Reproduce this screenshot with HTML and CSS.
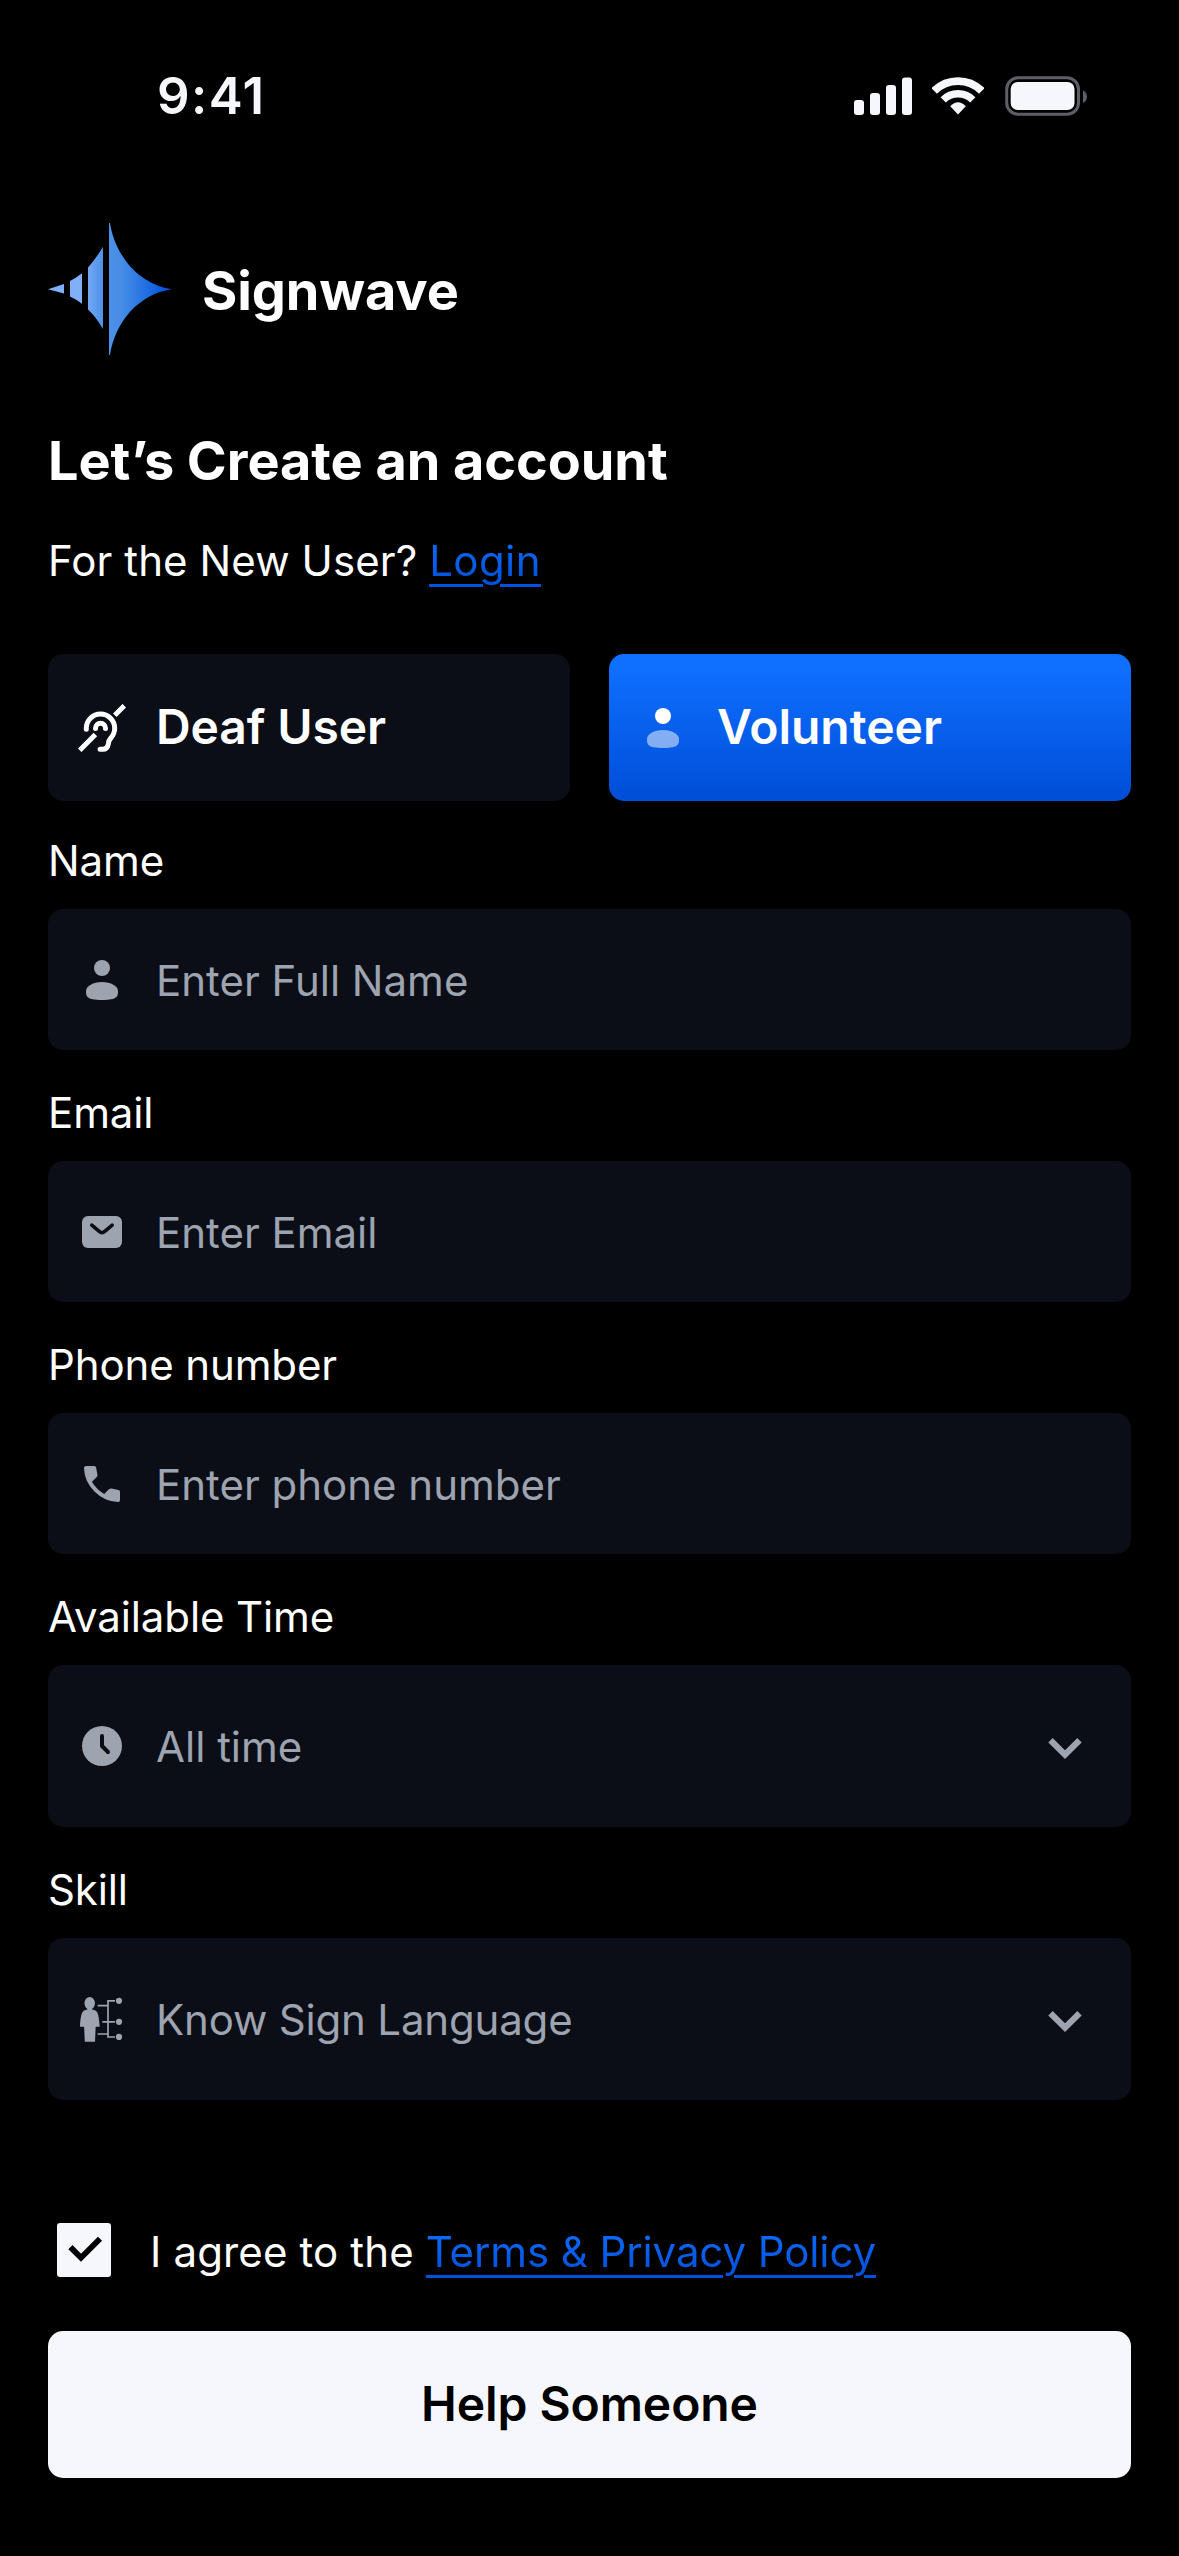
FILE: index.html
```html
<!DOCTYPE html>
<html lang="en">
<head>
<meta charset="utf-8">
<title>Signwave</title>
<link rel="stylesheet" href="styles.css">
</head>
<body>
<div class="status-bar">
  <span class="time">9:41</span>
  <div class="indicators">
    <svg width="58" height="38" viewBox="0 0 58 38" fill="currentColor"><rect x="0" y="23" width="10" height="15" rx="3"/><rect x="16" y="16" width="10" height="22" rx="3"/><rect x="32" y="8" width="10" height="30" rx="3"/><rect x="48" y="0.5" width="10" height="37.5" rx="3"/></svg>
    <svg class="wifi" width="52" height="38" viewBox="0 0 52 38" fill="none" stroke="currentColor"><path d="M2.2 13.9A33.7 33.7 0 0 1 49.8 13.9" stroke-width="7.8"/><path d="M11.2 22.9A21 21 0 0 1 40.8 22.9" stroke-width="7.4"/><path d="M26 37.6L18.2 29.3Q26 21 33.8 29.3Z" fill="currentColor" stroke="none"/></svg>
    <svg class="battery" width="82" height="40" viewBox="0 0 82 40"><rect x="1.7" y="1.7" width="71.8" height="36.6" rx="11.5" fill="none" stroke="#5d5e66" stroke-width="3"/><rect x="5.7" y="6" width="63.8" height="28" rx="7" fill="currentColor"/><path d="M78 14.5v12.5c2.500-1 4-3.400 4-6.200s-1.500-5.200-4-6.300" fill="#5d5e66"/></svg>
  </div>
</div>

<main class="screen">
  <header class="brand">
    <svg width="124" height="134" viewBox="0 0 124 134"><defs><linearGradient id="wave" gradientUnits="userSpaceOnUse" x1="0" y1="0" x2="124" y2="0"><stop offset="0.28" stop-color="#7fb0f8"/><stop offset="0.44" stop-color="#4f92e9"/><stop offset="0.6" stop-color="#468ce6"/><stop offset="0.95" stop-color="#0457de"/></linearGradient></defs><path fill="url(#wave)" d="M0 67.300L16 62v9.500zM22 58.900Q28 56 34 51.300v30.400Q28 77.500 22 74.600zM40 45.600Q48 36.500 55 24.700v82.300Q48 95 40 87.500zM61 1H62C67 33 90 62 123.800 67.300C90 72 67 101 62 133H61z"/></svg>
    <span class="brand-name">Signwave</span>
  </header>

  <h1 class="title">Let’s Create an account</h1>
  <p class="subtitle">For the New User? <a class="link">Login</a></p>

  <div class="roles">
    <div class="role">
      <svg class="icon" viewBox="0 0 48 48" fill="none" stroke="currentColor" stroke-width="5"><path d="M46.300 1.700L36.800 11.200M1.700 46.300L17.400 30.600"/><path stroke-linecap="round" d="M8.300 25.300V24.200A14.200 14.200 0 0 1 36.700 24.200c0 4.800-1.900 7.700-4.200 10.300c-1.900 2.200-1.900 3.600-2.200 5.500c-.6 3.300-2.700 5.300-5.600 5.300h-2.600"/><path stroke-linecap="round" d="M17.500 24.600v-.3a5 5 0 0 1 10 0v.3"/></svg>
      <span>Deaf User</span>
    </div>
    <div class="role role-active">
      <svg class="icon" viewBox="0 0 24 24" fill="currentColor"><circle cx="12" cy="6" r="4"/><path opacity=".5" d="M20 17.500c0 2.485 0 4.500-8 4.500s-8-2.015-8-4.500S7.582 13 12 13s8 2.015 8 4.500"/></svg>
      <span>Volunteer</span>
    </div>
  </div>

  <div class="group">
    <span class="label">Name</span>
    <div class="field">
      <svg class="icon" viewBox="0 0 24 24" fill="currentColor"><circle cx="12" cy="6" r="4"/><path d="M20 17.500c0 2.485 0 4.500-8 4.500s-8-2.015-8-4.500S7.582 13 12 13s8 2.015 8 4.500"/></svg>
      <span>Enter Full Name</span>
    </div>
  </div>

  <div class="group">
    <span class="label">Email</span>
    <div class="field">
      <svg class="icon" viewBox="0 0 24 24"><rect x="2" y="4" width="20" height="16" rx="3" fill="currentColor"/><path d="M6.900 8.600l3.700 3.100q1.400 1.200 2.800 0l3.700-3.100" fill="none" stroke="#0b0d17" stroke-width="1.800" stroke-linecap="round"/></svg>
      <span>Enter Email</span>
    </div>
  </div>

  <div class="group">
    <span class="label">Phone number</span>
    <div class="field">
      <svg class="icon" viewBox="0 0 24 24" fill="currentColor"><path d="M19.950 21q-3.125 0-6.175-1.362t-5.550-3.863t-3.862-5.550T3 4.050q0-.45.3-.75t.75-.3H8.100q.35 0 .625.238t.325.562l.65 3.500q.05.4-.025.675T9.400 8.450L6.975 10.900q.5.925 1.187 1.787t1.513 1.663q.775.775 1.625 1.438T13.100 17l2.350-2.350q.225-.225.588-.337t.712-.063l3.450.7q.35.1.575.363T21 15.900v4.050q0 .45-.3.75t-.75.3"/></svg>
      <span>Enter phone number</span>
    </div>
  </div>

  <div class="group">
    <span class="label">Available Time</span>
    <div class="field field-select">
      <svg class="icon" viewBox="0 0 24 24"><circle cx="12" cy="12" r="10" fill="currentColor"/><path d="M12 7v5l3 3" fill="none" stroke="#0b0d17" stroke-width="2" stroke-linecap="round" stroke-linejoin="round"/></svg>
      <span>All time</span>
      <svg class="icon chevron" viewBox="0 0 48 48" fill="none" stroke="currentColor" stroke-width="6.200"><path d="M9.500 18.200L24 32.700L38.500 18.200"/></svg>
    </div>
  </div>

  <div class="group">
    <span class="label">Skill</span>
    <div class="field field-select">
      <svg class="icon" viewBox="0 0 48 48" fill="currentColor"><ellipse cx="11.700" cy="8.300" rx="5.200" ry="6.300"/><path d="M9.500 13h4.500v1.500c3.500.3 5.500 2 6.200 5.500c.7 3.600 1.300 7.800 1.500 11.700h-4l-.7 15H6.800l-.7-15H2c0-4 .5-8.200 1.300-11.700c.8-3.500 2.700-5.200 6.200-5.500z"/><path d="M37 5.800H30V42h7M19.700 10.700H30M24.300 26.800H37M19.700 39H30" fill="none" stroke="currentColor" stroke-width="1.700"/><circle cx="41" cy="5.800" r="3.100"/><circle cx="41" cy="26.800" r="3.100"/><circle cx="41" cy="41.900" r="3.100"/></svg>
      <span class="skill-value">Know Sign Language</span>
      <svg class="icon chevron" viewBox="0 0 48 48" fill="none" stroke="currentColor" stroke-width="6.200"><path d="M9.500 18.200L24 32.700L38.500 18.200"/></svg>
    </div>
  </div>

  <div class="agree">
    <svg class="checkbox" viewBox="0 0 54 54"><rect width="54" height="54" rx="3" fill="#f6f7fc"/><path d="M13.400 24.100L24 34.700L43 15.700" fill="none" stroke="#000" stroke-width="5.800"/></svg>
    <span>I agree to the <a class="link">Terms &amp; Privacy Policy</a></span>
  </div>

  <div class="submit"><span>Help Someone</span></div>
</main>
</body>
</html>
```

FILE: styles.css
```css
* {
  box-sizing: border-box;
}

body {
  margin: 0;
  width: 1179px;
  height: 2556px;
  background: #000;
  color: #fff;
  font-family: Inter, "Liberation Sans", sans-serif;
  font-size: 42px;
  line-height: 51px;
}

svg {
  display: block;
  flex: none;
}

.status-bar {
  display: flex;
  align-items: center;
  justify-content: space-between;
  height: 192px;
  padding: 0 92px 0 157px;
  color: #f6f7fc;
}

.time {
  font-size: 51px;
  line-height: 62px;
  font-weight: 600;
  letter-spacing: 1.4px;
}

.indicators {
  display: flex;
  align-items: center;
}

.wifi {
  margin-left: 20px;
}

.battery {
  margin-left: 21px;
}

.screen {
  display: flex;
  flex-direction: column;
  padding: 30px 48px 0;
}

.brand {
  display: flex;
  align-items: center;
  gap: 30px;
}

.brand-name {
  padding-top: 3px;
  font-size: 54px;
  line-height: 66px;
  font-weight: 700;
  letter-spacing: -0.1px;
}

.title {
  margin: 72px 0 0;
  font-size: 54px;
  line-height: 66px;
  font-weight: 700;
  letter-spacing: -0.05px;
}

.subtitle {
  margin: 41px 0 68px;
  letter-spacing: 0.1px;
}

.link {
  color: transparent;
  background: linear-gradient(180deg, #0f6fff, #004fd8);
  background-clip: text;
  -webkit-background-clip: text;
  text-decoration: underline;
  text-decoration-color: #0052dc;
  text-decoration-thickness: 3px;
  text-underline-offset: 8px;
}

.subtitle .link {
  letter-spacing: 0.4px;
}

.roles {
  display: grid;
  grid-template-columns: 1fr 1fr;
  gap: 39px;
  margin-bottom: 33px;
}

.role {
  display: flex;
  align-items: center;
  gap: 30px;
  height: 147px;
  padding: 0 30px;
  border-radius: 15px;
  background: #0b0d17;
  font-size: 48px;
  line-height: 58px;
  font-weight: 600;
  letter-spacing: -0.1px;
}

.role-active {
  background: linear-gradient(180deg, #0f6fff 10%, #004fd8 95%);
  letter-spacing: 0;
}

.role span,
.submit span {
  padding-bottom: 2px;
}

.icon {
  width: 48px;
  height: 48px;
}

.group {
  display: flex;
  flex-direction: column;
  gap: 23px;
  margin-bottom: 36px;
}

.label {
  padding-top: 1px;
  letter-spacing: -0.12px;
}

.field {
  display: flex;
  align-items: center;
  gap: 30px;
  height: 141px;
  padding: 0 42px 0 30px;
  border-radius: 15px;
  background: #0b0d17;
  color: #9da3af;
}

.field span {
  padding-top: 1px;
}

.field-select {
  height: 162px;
}

.field .skill-value {
  letter-spacing: -0.18px;
}

.chevron {
  margin-left: auto;
}

.agree {
  display: flex;
  align-items: center;
  gap: 39px;
  margin-top: 87px;
  padding-left: 9px;
}

.agree span {
  padding-top: 3px;
  letter-spacing: 0.15px;
}

.agree .link {
  letter-spacing: -0.1px;
}

.checkbox {
  width: 54px;
  height: 54px;
}

.submit {
  display: flex;
  align-items: center;
  justify-content: center;
  height: 147px;
  margin-top: 54px;
  border-radius: 15px;
  background: #f6f7fc;
  color: #000;
  font-size: 48px;
  line-height: 58px;
  font-weight: 600;
  letter-spacing: -0.08px;
}
```
